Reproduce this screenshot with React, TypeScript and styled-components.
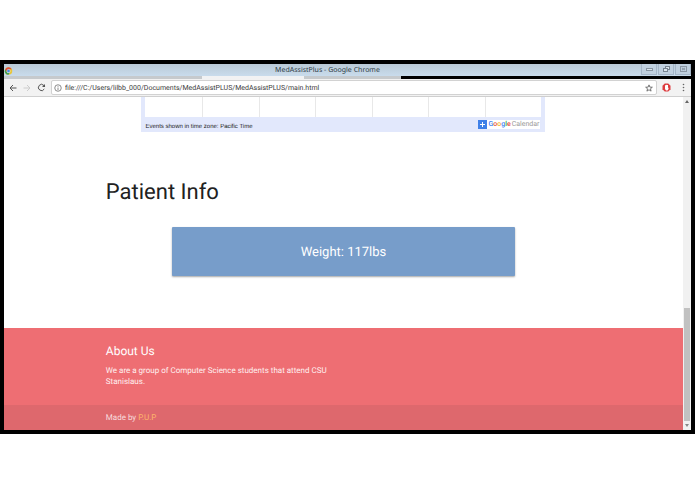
import React from "react";
import styled, { createGlobalStyle } from "styled-components";

const GlobalStyle = createGlobalStyle`
  *, *::before, *::after { box-sizing: border-box; }
  body {
    margin: 0;
    background: #fff;
    font-family: Roboto, sans-serif;
    text-rendering: geometricPrecision;
  }
  button, input { font: inherit; margin: 0; padding: 0; border: 0; background: none; color: inherit; text-rendering: inherit; }
`;

const Desktop = styled.div`
  padding: 60px 0;
`;

const Frame = styled.div`
  background: #000;
  padding: 4px;
`;

const TitleBar = styled.header`
  display: grid;
  grid-template-columns: 1fr auto 1fr;
  align-items: center;
  height: 12px;
  background: linear-gradient(#b9c9d6, #c9dcec);
  color: #2d3a44;
  font: 7px/12px "Noto Sans", sans-serif;
  svg { display: block; }
`;

const WindowTitle = styled.span`
  padding-top: 1px;
  padding-right: 40px;
  white-space: nowrap;
`;

const WindowButtons = styled.div`
  display: flex;
  justify-content: flex-end;
  align-self: start;
  gap: 1px;
`;

const WindowButton = styled.button`
  display: grid;
  place-items: center;
  width: 16px;
  height: 11px;
  background: #c0d0df;
  border: 1px solid #a4b5c7;
  border-top: 0;
`;

const TabStrip = styled.div`
  display: flex;
  height: 3px;
  background: #000;
`;

const Tab = styled.div<{ $active?: boolean; $grow: number }>`
  flex: ${(p) => p.$grow} 0 0;
  background: ${(p) => (p.$active ? "#f1f2f3" : "#c6cacd")};
`;

const TabSpace = styled.div`
  flex: 290 0 0;
`;

const Toolbar = styled.div`
  display: flex;
  align-items: center;
  height: 18px;
  padding: 0 1px 0 2px;
  background: #f2f2f2;
  border-bottom: 1px solid #cfcfcf;
`;

const ToolButton = styled.button`
  display: grid;
  place-items: center;
  flex: none;
  width: 14px;
  height: 14px;
  svg { display: block; }
`;

const Address = styled.div`
  display: flex;
  align-items: center;
  flex: 1;
  height: 15px;
  margin: 0 2px 0 3px;
  padding-left: 2px;
  background: #fff;
  border: 1px solid #d2d2d2;
  border-radius: 2px;
`;

const AddressInput = styled.input`
  flex: 1;
  min-width: 0;
  height: 13px;
  padding: 1px 0 0 3px;
  color: #3c3c3c;
  font: 7px/12px Roboto, sans-serif;
  outline: 0;
`;

const Nav = styled.nav`
  display: flex;
`;

const Extensions = styled.div`
  display: flex;
  gap: 3px;
`;

const Viewport = styled.div`
  display: flex;
  background: #fff;
`;

const Page = styled.div`
  flex: 1;
  min-width: 0;
`;

const Container = styled.div`
  width: 70%;
  margin: 0 auto;
`;

const Calendar = styled.section`
  width: 85%;
  margin: 0 auto;
  padding: 0 4px;
  background: #e2e8fc;
`;

const Days = styled.div`
  display: grid;
  grid-template-columns: repeat(7, 1fr);
  height: 20px;
  background: #fff;
`;

const Day = styled.div`
  & + & { border-left: 1px solid #e8e8e8; }
`;

const CalendarFooter = styled.div`
  display: flex;
  justify-content: space-between;
  align-items: center;
  height: 15px;
  padding-right: 1px;
  color: #222;
  font: 6px/9px "Liberation Sans", sans-serif;
`;

const TimeZone = styled.span`
  padding-top: 6px;
`;

const CalendarLink = styled.a`
  display: flex;
  align-items: center;
  gap: 1px;
  height: 9px;
  padding-right: 1px;
  background: #fff;
  color: #999;
  font: 7px/9px Roboto, sans-serif;
  text-decoration: none;
  svg { display: block; }
`;

const Letter = styled.span<{ $color: string }>`
  color: ${(p) => p.$color};
`;

const Brand = styled.span`
  padding-right: 1px;
  font-weight: 500;
`;

const Heading = styled.h1`
  margin: 45px 0 19px;
  color: #212121;
  font-size: 22px;
  font-weight: 400;
  line-height: 31px;
`;

const Card = styled.div`
  width: 72%;
  margin: 0 auto 52px;
  padding: 16px 0 13px;
  background: #779dca;
  border-radius: 1px;
  box-shadow: 0 1px 2px rgba(0, 0, 0, 0.35);
  color: #fff;
  font-size: 13px;
  line-height: 20px;
  text-align: center;
`;

const Footer = styled.footer`
  padding-top: 13px;
  background: #ee6e73;
  color: #fff;
`;

const FooterTitle = styled.h2`
  margin: 0 0 4px;
  font-size: 12px;
  font-weight: 400;
  line-height: 20px;
`;

const FooterText = styled.p`
  width: 50%;
  min-width: 230px;
  margin: 0 0 18px;
  color: #fff0f0;
  font-size: 8px;
  line-height: 11px;
`;

const Copyright = styled.div`
  height: 25px;
  background: #de686d;
  color: #f8dcdd;
  font-size: 8px;
  line-height: 25px;
`;

const MakerLink = styled.a`
  color: #ffb66b;
  text-decoration: none;
`;

const ScrollBar = styled.div`
  display: flex;
  flex-direction: column;
  width: 8px;
  background: #f1f1f1;
`;

const ScrollTrack = styled.div`
  display: flex;
  flex: 1;
  flex-direction: column;
  justify-content: flex-end;
`;

const ScrollThumb = styled.div`
  height: 36%;
  margin: 0 1px;
  background: #c1c1c1;
`;

const ScrollButton = styled.button`
  display: grid;
  place-items: center;
  height: 9px;
`;

const ChromeLogo = () => (
  <svg width="9" height="10" viewBox="0 0 24 24" aria-hidden="true">
    <circle cx="12" cy="12" r="10" fill="#e8c63c" />
    <path d="M3.3 7A10 10 0 0 1 20.7 7H12L7.7 14.5Z" fill="#df4b3d" />
    <path d="M3.3 7A10 10 0 0 0 12 22L16.3 14.5H7.7Z" fill="#3e9d57" />
    <circle cx="12" cy="12" r="5" fill="#fff" />
    <circle cx="12" cy="12" r="3.8" fill="#4a86dc" />
  </svg>
);

const Arrow = ({ color, flip }: { color: string; flip?: boolean }) => (
  <svg width="8" height="8" viewBox="0 0 16 16" fill="none" stroke={color} strokeWidth="2" aria-hidden="true">
    <path d={flip ? "M1 8H14M8 2L14 8L8 14" : "M15 8H2M8 2L2 8L8 14"} />
  </svg>
);

const WEEK = [0, 1, 2, 3, 4, 5, 6];
const GOOGLE: [string, string][] = [
  ["G", "#4285f4"], ["o", "#e8523f"], ["o", "#f3b51c"],
  ["g", "#4285f4"], ["l", "#34a853"], ["e", "#e8523f"],
];

export default function App() {
  return (
    <>
      <GlobalStyle />
      <Desktop>
        <Frame>
          <TitleBar>
            <ChromeLogo />
            <WindowTitle>MedAssistPlus - Google Chrome</WindowTitle>
            <WindowButtons>
              <WindowButton aria-label="Minimize">
                <svg width="7" height="6" viewBox="0 0 7 6" fill="#dce6ef" stroke="#8794a1">
                  <rect x=".5" y="2.5" width="6" height="2" />
                </svg>
              </WindowButton>
              <WindowButton aria-label="Restore">
                <svg width="7" height="7" viewBox="0 0 7 7" fill="#dce6ef" stroke="#768390">
                  <rect x="2.5" y=".5" width="4" height="3" />
                  <rect x=".5" y="2.5" width="4" height="3" />
                </svg>
              </WindowButton>
              <WindowButton aria-label="Close">
                <svg width="7" height="6" viewBox="0 0 7 6" fill="none" stroke="#8b97a4">
                  <rect x=".5" y=".5" width="6" height="5" />
                  <path d="M2 2L5 4M5 2L2 4" />
                </svg>
              </WindowButton>
            </WindowButtons>
          </TitleBar>
          <TabStrip>
            <Tab $grow={198} />
            <Tab $grow={102} $active />
            <Tab $grow={97} />
            <TabSpace />
          </TabStrip>
          <Toolbar>
            <Nav>
              <ToolButton aria-label="Back"><Arrow color="#555" /></ToolButton>
              <ToolButton aria-label="Forward"><Arrow color="#ccc" flip /></ToolButton>
              <ToolButton aria-label="Reload">
                <svg width="9" height="9" viewBox="0 0 18 18" fill="none" stroke="#555" strokeWidth="2">
                  <path d="M14.5 12A6.2 6.2 0 1 1 13.5 4.7L15 6.5" />
                  <path d="M16 2V8H10Z" fill="#555" stroke="none" />
                </svg>
              </ToolButton>
            </Nav>
            <Address>
              <svg width="8" height="8" viewBox="0 0 16 16" fill="none" stroke="#666" strokeWidth="1.5" aria-hidden="true">
                <circle cx="8" cy="8" r="6.5" />
                <path d="M8 7V12M8 4V5.5" />
              </svg>
              <AddressInput
                aria-label="Address"
                spellCheck={false}
                defaultValue="file:///C:/Users/lilbb_000/Documents/MedAssistPLUS/MedAssistPLUS/main.html"
              />
              <ToolButton aria-label="Bookmark">
                <svg width="8" height="8" viewBox="0 0 18 18" fill="none" stroke="#666" strokeWidth="2">
                  <path d="M9 2L11 7L16.5 7.3L12.3 10.7L13.7 16L9 13L4.3 16L5.7 10.7L1.5 7.3L7 7Z" />
                </svg>
              </ToolButton>
            </Address>
            <Extensions>
              <ToolButton aria-label="Ad blocker">
                <svg width="9" height="9" viewBox="0 0 18 18">
                  <path d="M5.5 1H12.5L17 5.5V12.5L12.5 17H5.5L1 12.5V5.5Z" fill="#dd3b3e" />
                  <path d="M6 5H7V4H9V3.500H10V4H12V10L13 9V12L11 15H8L6 12Z" fill="#fff" />
                </svg>
              </ToolButton>
              <ToolButton aria-label="Menu">
                <svg width="3" height="9" viewBox="0 0 3 9" fill="#666">
                  <circle cx="1.500" cy="1.500" r="0.800" />
                  <circle cx="1.500" cy="4.500" r="0.800" />
                  <circle cx="1.500" cy="7.500" r="0.800" />
                </svg>
              </ToolButton>
            </Extensions>
          </Toolbar>
          <Viewport>
            <Page>
              <Container as="main">
                <Calendar aria-label="Calendar">
                  <Days>{WEEK.map((d) => <Day key={d} />)}</Days>
                  <CalendarFooter>
                    <TimeZone>Events shown in time zone: Pacific Time</TimeZone>
                    <CalendarLink href="#calendar">
                      <svg width="9" height="9" viewBox="0 0 9 9" aria-hidden="true">
                        <path d="M0 0H9V9H0Z" fill="#3f80e8" />
                        <path d="M4.500 2V7M2 4.500H7" stroke="#fff" />
                      </svg>
                      <span>
                        <Brand>
                          {GOOGLE.map(([letter, color], i) => (
                            <Letter key={i} $color={color}>{letter}</Letter>
                          ))}
                        </Brand>
                        Calendar
                      </span>
                    </CalendarLink>
                  </CalendarFooter>
                </Calendar>
                <Heading>Patient Info</Heading>
                <Card>Weight: 117lbs</Card>
              </Container>
              <Footer>
                <Container>
                  <FooterTitle>About Us</FooterTitle>
                  <FooterText>
                    We are a group of Computer Science students that attend CSU Stanislaus.
                  </FooterText>
                </Container>
                <Copyright>
                  <Container>
                    Made by <MakerLink href="#maker">P.U.P</MakerLink>
                  </Container>
                </Copyright>
              </Footer>
            </Page>
            <ScrollBar>
              <ScrollButton aria-label="Scroll up">
                <svg width="4" height="3" viewBox="0 0 4 3"><path d="M0 3L2 0L4 3Z" fill="#666" /></svg>
              </ScrollButton>
              <ScrollTrack><ScrollThumb /></ScrollTrack>
              <ScrollButton aria-label="Scroll down">
                <svg width="4" height="3" viewBox="0 0 4 3"><path d="M0 0H4L2 3Z" fill="#888" /></svg>
              </ScrollButton>
            </ScrollBar>
          </Viewport>
        </Frame>
      </Desktop>
    </>
  );
}
